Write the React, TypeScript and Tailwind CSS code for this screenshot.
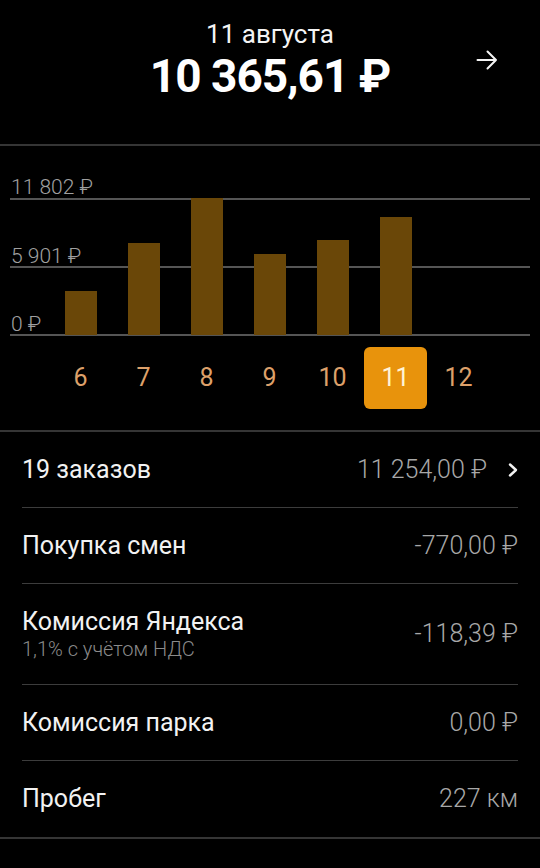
import React from "react";

const bars = [44, 92, 137, 81, 95, 118, 0];
const days = ["6", "7", "8", "9", "10", "11", "12"];

function Row({
  title,
  sub,
  value,
  chevron,
  tall,
  last,
}: {
  title: string;
  sub?: string;
  value: string;
  chevron?: boolean;
  tall?: boolean;
  last?: boolean;
}) {
  return (
    <div
      className={`flex items-center justify-between ${tall ? "h-[101px]" : "h-[76px]"} ${
        last ? "" : "border-b border-[#3c3c3c]"
      }`}
    >
      <div className="flex flex-col">
        <div className="text-[25px] leading-[30px] text-[#f2f2f2]">{title}</div>
        {sub && <div className="text-[20px] leading-[24px] text-[#8a8a8a] font-light">{sub}</div>}
      </div>
      <div className="flex items-center">
        <div className="text-[25px] leading-[30px] text-[#a8a8a8] font-light">{value}</div>
        {chevron && (
          <svg width="12" height="16" viewBox="0 0 12 16" className="ml-[20px] mr-[-1px]">
            <path d="M3 2.5 L9 8 L3 13.5" fill="none" stroke="#f2f2f2" strokeWidth="2.4" strokeLinecap="round" strokeLinejoin="round" />
          </svg>
        )}
      </div>
    </div>
  );
}

export default function App() {
  return (
    <div
      className="w-[540px] h-[868px] bg-black overflow-hidden text-white"
      style={{ fontFamily: "Roboto, 'Noto Sans', 'DejaVu Sans', sans-serif" }}
    >
      {/* Header */}
      <div className="relative h-[144px] flex flex-col items-center pt-[19px]">
        <div className="text-[26px] leading-[31px] text-[#f4f4f4]">11 августа</div>
        <div className="text-[46px] leading-[52px] font-bold tracking-[-1px] text-white">10 365,61 ₽</div>
        <svg width="22" height="22" viewBox="0 0 22 22" className="absolute left-[476px] top-[49px]">
          <path d="M1.5 11 H20 M11.5 2.5 L20 11 L11.5 19.5" fill="none" stroke="#f4f4f4" strokeWidth="2" strokeLinecap="round" strokeLinejoin="round" />
        </svg>
      </div>
      <div className="h-[2px] bg-[#353535]" />

      {/* Chart */}
      <div className="h-[284px] flex flex-col">
        <div className="relative h-[190px]">
          {[52, 120, 188].map((t) => (
            <div key={t} className="absolute left-[10px] right-[10px] h-[1.5px] bg-[#555555]" style={{ top: t }} />
          ))}
          <div className="absolute left-[11px] top-[29px] text-[21px] leading-[24px] text-[#a0a0a0] font-light">11 802 ₽</div>
          <div className="absolute left-[11px] top-[98px] text-[21px] leading-[24px] text-[#a0a0a0] font-light">5 901 ₽</div>
          <div className="absolute left-[11px] top-[166px] text-[21px] leading-[24px] text-[#a0a0a0] font-light">0 ₽</div>
          <div className="absolute left-[49px] bottom-[1px] flex items-end">
            {bars.map((h, i) => (
              <div key={i} className="w-[63px] flex justify-center">
                <div className="w-[32px] bg-[#6a4708]" style={{ height: h }} />
              </div>
            ))}
          </div>
        </div>
        <div className="flex pl-[49px] mt-[11px]">
          {days.map((d) => (
            <div
              key={d}
              className={`w-[63px] h-[62px] flex items-center justify-center text-[25px] ${
                d === "11" ? "bg-[#e8930c] rounded-[6px] text-[#fff4d8]" : "text-[#dda06a]"
              }`}
            >
              {d}
            </div>
          ))}
        </div>
      </div>
      <div className="h-[2px] bg-[#353535]" />

      {/* List */}
      <div className="mx-[22px]">
        <Row title="19 заказов" value="11 254,00 ₽" chevron />
        <Row title="Покупка смен" value="-770,00 ₽" />
        <Row title="Комиссия Яндекса" sub="1,1% с учётом НДС" value="-118,39 ₽" tall />
        <Row title="Комиссия парка" value="0,00 ₽" />
        <Row title="Пробег" value="227 км" last />
      </div>
      <div className="h-[2px] bg-[#353535]" />
      <div className="mx-[22px] pt-[6px]">
        <Row title="Бонусы" value="1 200,00 ₽" chevron last />
      </div>
    </div>
  );
}
